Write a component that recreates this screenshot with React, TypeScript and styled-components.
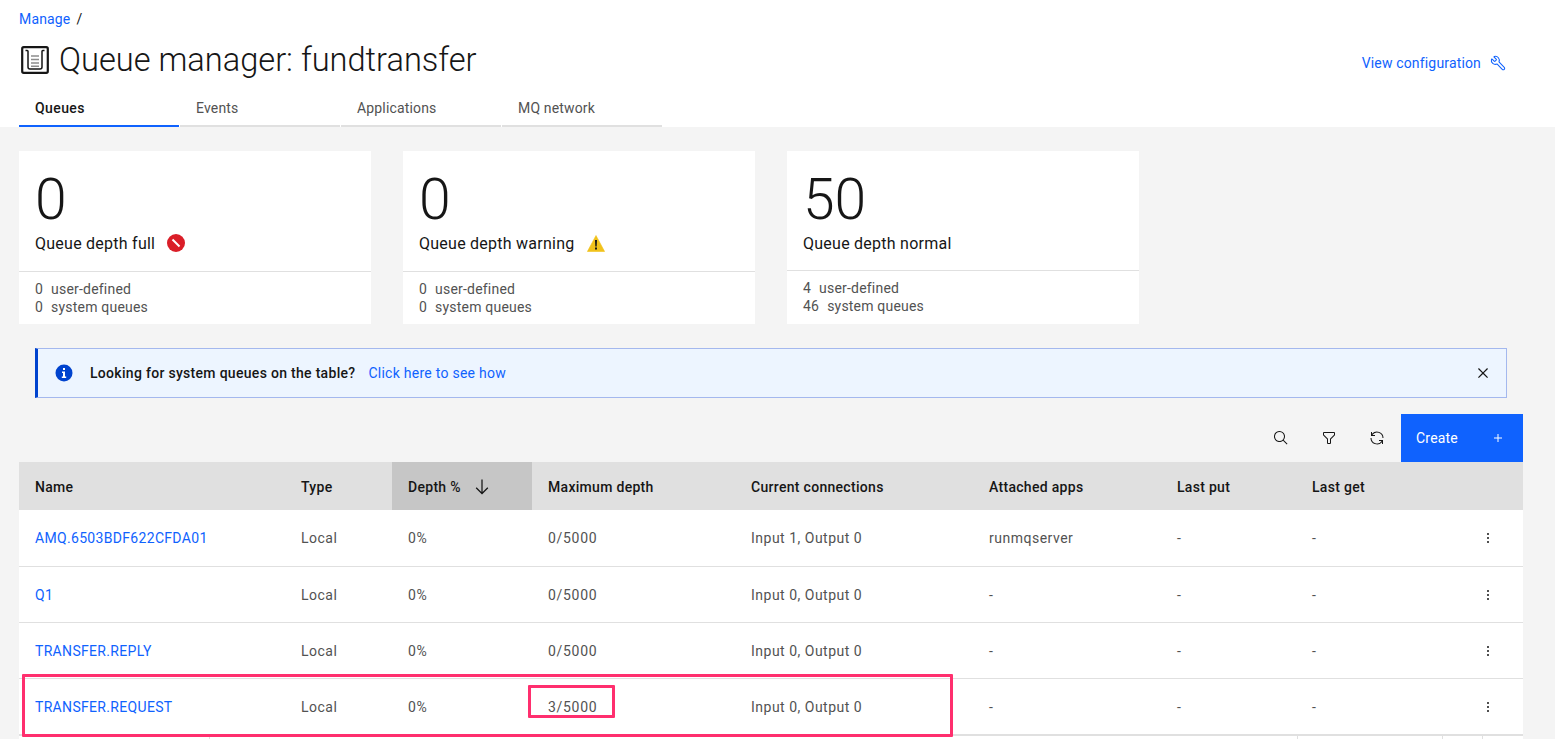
import styled, { createGlobalStyle } from 'styled-components';
import { Wrench } from 'lucide-react';

const GlobalStyle = createGlobalStyle`
    html, body {
        margin: 0;
        height: 739px;
        overflow: hidden;
        background: #f4f4f4;
    }
    * { box-sizing: border-box; }
    body {
        font-family: "Roboto", "Liberation Sans", sans-serif;
        color: #161616;
    }
`;

const Page = styled.div`
    position: relative;
    width: 1555px;
    height: 739px;
    overflow: hidden;
`;

const Header = styled.header`
    height: 127px;
    background: #fff;
    padding: 10px 19px 0;
    display: flex;
    flex-direction: column;
`;

const Breadcrumb = styled.div`
    height: 17px;
    display: flex;
    align-items: center;
    gap: 6px;
    font-size: 14px;
    letter-spacing: 0.16px;
    color: #161616;
`;

const Link = styled.a`
    color: #0f62fe;
    font-size: 14px;
    letter-spacing: 0.16px;
    text-decoration: none;
`;

const TitleRow = styled.div`
    height: 63px;
    padding: 3px 30px 0 2px;
    display: flex;
    align-items: center;
    gap: 10px;
`;

const Title = styled.h1`
    margin: 0;
    font-size: 32.6px;
    font-weight: 300;
    flex: 1;
    color: #161616;
`;

const ConfigLink = styled(Link)`
    margin-top: 6px;
    display: flex;
    align-items: center;
    gap: 9px;
`;

const Tabs = styled.nav`
    display: flex;
    gap: 1px;
`;

const Tab = styled.div<{ $active?: boolean }>`
    width: 160px;
    height: 37px;
    padding: 10px 16px 0;
    font-size: 14px;
    letter-spacing: ${props => props.$active ? '0.4px' : '0.16px'};
    font-weight: ${props => props.$active ? 500 : 400};
    color: ${props => props.$active ? '#161616' : '#525252'};
    border-bottom: 2px solid ${props => props.$active ? '#0f62fe' : '#e0e0e0'};
`;

const Content = styled.main`
    padding: 24px 32px 0 19px;
`;

const Cards = styled.div`
    display: flex;
    gap: 32px;
`;

const Card = styled.section`
    width: 352px;
    height: 173px;
    background: #fff;
`;

const CardTop = styled.div<{ $height: number }>`
    height: ${props => props.$height}px;
    padding: 18px 16px 0;
    border-bottom: 1px solid #e0e0e0;
`;

const CardNumber = styled.div`
    font-size: 57px;
    line-height: 62px;
    font-weight: 300;
`;

const CardLabel = styled.div`
    display: flex;
    align-items: center;
    gap: 12px;
    margin-top: 2px;
    font-size: 16px;
    line-height: 22px;
    letter-spacing: 0.25px;

    svg {
        margin-top: -2px;
    }
`;

const CardBottom = styled.div`
    padding: 8px 16px 0;
    font-size: 14px;
    line-height: 18px;
    letter-spacing: 0.2px;
    color: #525252;
`;

const CountRow = styled.div`
    display: flex;
    gap: 8px;
`;

const Notification = styled.div`
    margin: 24px 16px 0;
    height: 50px;
    display: flex;
    align-items: center;
    background: #edf5ff;
    border: 1px solid #a4b8ee;
    border-left: 3px solid #0043ce;
    padding: 0 13px 0 17px;
    font-size: 14px;
    letter-spacing: 0.3px;
`;

const NotificationText = styled.strong`
    font-weight: 500;
    margin: 0 13px 0 17px;
`;

const NotificationLink = styled(Link)`
    letter-spacing: 0.26px;
`;

const CloseButton = styled.span`
    margin-left: auto;
    display: flex;
`;

const Toolbar = styled.div`
    margin-top: 16px;
    height: 48px;
    display: flex;
    justify-content: flex-end;
    align-items: center;
`;

const ToolIcon = styled.span`
    width: 48px;
    height: 48px;
    display: flex;
    align-items: center;
    justify-content: center;
`;

const CreateButton = styled.button`
    width: 122px;
    height: 48px;
    border: 0;
    padding: 0 17px 0 15px;
    background: #0f62fe;
    color: #fff;
    font: inherit;
    font-size: 14px;
    letter-spacing: 0.2px;
    display: flex;
    align-items: center;
    justify-content: space-between;
`;

const Table = styled.table`
    width: 1504px;
    border-collapse: collapse;
    table-layout: fixed;
    font-size: 14px;
    letter-spacing: 0.5px;
    background: #fff;
`;

const Th = styled.th<{ $sorted?: boolean }>`
    height: 48px;
    padding: 1px 16px 0;
    text-align: left;
    font-weight: 500;
    letter-spacing: 0.3px;
    color: #161616;
    background: ${props => props.$sorted ? '#c6c6c6' : '#e0e0e0'};
`;

const SortHead = styled.span`
    display: flex;
    align-items: center;
    gap: 11px;
`;

const Tr = styled.tr`
    height: 56px;
    border-bottom: 1px solid #e0e0e0;
`;

const Td = styled.td<{ $numeric?: boolean }>`
    padding: 1px 16px 0;
    color: #525252;
    letter-spacing: ${props => props.$numeric ? '0.7px' : 'inherit'};
`;

const NameLink = styled(Link)`
    letter-spacing: 0.32px;
`;

const MenuSplit = styled.div`
    display: flex;
    justify-content: space-between;
    align-items: center;
    padding-right: 11px;
`;

const Pagination = styled.div`
    height: 48px;
    width: 1504px;
    background: #fff;
    border-top: 1px solid #e0e0e0;
    display: flex;
    justify-content: flex-end;
`;

const PageCell = styled.div<{ $width: number }>`
    width: ${props => props.$width}px;
    border-left: 1px solid #e0e0e0;
`;

const Highlight = styled.div`
    position: absolute;
    border: 3px solid #ff2f6e;
    border-radius: 1px;
    pointer-events: none;
`;

const RowHighlight = styled(Highlight)`
    left: 22px;
    top: 674px;
    width: 931px;
    height: 63px;
`;

const CellHighlight = styled(Highlight)`
    left: 528px;
    top: 685px;
    width: 87px;
    height: 33px;
`;

const CarbonIcon = ({ size = 16, color = '#161616', children }: { size?: number, color?: string, children: any }) => (
    <svg width={size} height={size} viewBox="0 0 32 32" fill={color}>{children}</svg>
);

const ManagerIcon = () => (
    <svg width="28" height="28" viewBox="0 0 28 28" fill="none">
        <rect x="1.2" y="1.2" width="25.6" height="25.6" rx="1.5" stroke="#161616" strokeWidth="2.2" />
        <path d="M4.5 4.5h1.7a.8.8 0 0 1 .8.8V21a2 2 0 0 0 2 2h10a2 2 0 0 0 2-2V5.3a.8.8 0 0 1 .8-.8h1.7" stroke="#161616" strokeWidth="1.5" />
        <path d="M10 10h8M10 13.5h8M10 17h8M10 20.3h8" stroke="#8d8d8d" strokeWidth="1.5" />
    </svg>
);

const columns = [266, 107, 140, 203, 238, 188, 135, 227];

const rows = [
    { name: 'AMQ.6503BDF622CFDA01', max: '0/5000', conn: 'Input 1, Output 0', apps: 'runmqserver' },
    { name: 'Q1', max: '0/5000', conn: 'Input 0, Output 0', apps: '-' },
    { name: 'TRANSFER.REPLY', max: '0/5000', conn: 'Input 0, Output 0', apps: '-' },
    { name: 'TRANSFER.REQUEST', max: '3/5000', conn: 'Input 0, Output 0', apps: '-' },
];

const App = () => {
    return (
        <Page>
            <GlobalStyle />
            <Header>
                <Breadcrumb><Link>Manage</Link><span>/</span></Breadcrumb>
                <TitleRow>
                    <ManagerIcon />
                    <Title>Queue manager: fundtransfer</Title>
                    <ConfigLink>View configuration <Wrench size={16} strokeWidth={1.6} style={{ transform: 'scaleX(-1)' }} /></ConfigLink>
                </TitleRow>
                <Tabs>
                    <Tab $active>Queues</Tab>
                    <Tab>Events</Tab>
                    <Tab>Applications</Tab>
                    <Tab>MQ network</Tab>
                </Tabs>
            </Header>
            <Content>
                <Cards>
                    <Card>
                        <CardTop $height={121}>
                            <CardNumber>0</CardNumber>
                            <CardLabel>
                                Queue depth full
                                <svg width="18" height="18" viewBox="0 0 18 18">
                                    <circle cx="9" cy="9" r="9" fill="#da1e28" />
                                    <path d="M5.5 5.5l7 7" stroke="#fff" strokeWidth="2" />
                                </svg>
                            </CardLabel>
                        </CardTop>
                        <CardBottom>
                            <CountRow><span>0</span><span>user-defined</span></CountRow>
                            <CountRow><span>0</span><span>system queues</span></CountRow>
                        </CardBottom>
                    </Card>
                    <Card>
                        <CardTop $height={121}>
                            <CardNumber>0</CardNumber>
                            <CardLabel>
                                Queue depth warning
                                <svg width="18" height="17" viewBox="0 0 18 17">
                                    <path d="M9 .5l8.6 16H.4z" fill="#f1c21b" stroke="#f1c21b" strokeWidth="0.6" strokeLinejoin="round" />
                                    <path d="M8 5h2l-.3 6.5H8.3zM8 12.6h2v2H8z" fill="#161616" />
                                </svg>
                            </CardLabel>
                        </CardTop>
                        <CardBottom>
                            <CountRow><span>0</span><span>user-defined</span></CountRow>
                            <CountRow><span>0</span><span>system queues</span></CountRow>
                        </CardBottom>
                    </Card>
                    <Card>
                        <CardTop $height={120}>
                            <CardNumber>50</CardNumber>
                            <CardLabel>Queue depth normal</CardLabel>
                        </CardTop>
                        <CardBottom>
                            <CountRow><span>4</span><span>user-defined</span></CountRow>
                            <CountRow><span>46</span><span>system queues</span></CountRow>
                        </CardBottom>
                    </Card>
                </Cards>
                <Notification>
                    <svg width="18" height="18" viewBox="0 0 18 18">
                        <circle cx="9" cy="9" r="8.5" fill="#0043ce" />
                        <path d="M8 4h2v2H8zM7 7.5h3v5h1.2V14H6.8v-1.5H8V9H7z" fill="#fff" />
                    </svg>
                    <NotificationText>Looking for system queues on the table?</NotificationText>
                    <NotificationLink>Click here to see how</NotificationLink>
                    <CloseButton>
                        <CarbonIcon size={20}>
                            <path d="M24 9.4L22.6 8 16 14.6 9.4 8 8 9.4 14.6 16 8 22.6 9.4 24 16 17.4 22.6 24 24 22.6 17.4 16 24 9.4z" />
                        </CarbonIcon>
                    </CloseButton>
                </Notification>
                <Toolbar>
                    <ToolIcon>
                        <CarbonIcon>
                            <path d="M29 27.5859l-7.5521-7.5521a11.0177 11.0177 0 1 0-1.4141 1.4141L27.5859 29ZM4 13a9 9 0 1 1 9 9A9.01 9.01 0 0 1 4 13Z" />
                        </CarbonIcon>
                    </ToolIcon>
                    <ToolIcon>
                        <CarbonIcon>
                            <path d="M18,28H14a2,2,0,0,1-2-2V18.41L4.59,11A2,2,0,0,1,4,9.59V6A2,2,0,0,1,6,4H26a2,2,0,0,1,2,2V9.59A2,2,0,0,1,27.41,11L20,18.41V26A2,2,0,0,1,18,28ZM6,6V9.59l8,8V26h4V17.59l8-8V6Z" />
                        </CarbonIcon>
                    </ToolIcon>
                    <ToolIcon>
                        <CarbonIcon>
                            <path d="M12,10H6.78A11,11,0,0,1,27,16h2A13,13,0,0,0,6,7.68V4H4v8h8Z" />
                            <path d="M20,22h5.22A11,11,0,0,1,5,16H3a13,13,0,0,0,23,8.32V28h2V20H20Z" />
                        </CarbonIcon>
                    </ToolIcon>
                    <CreateButton>
                        Create
                        <CarbonIcon color="#fff">
                            <path d="M17 15L17 8 15 8 15 15 8 15 8 17 15 17 15 24 17 24 17 17 24 17 24 15z" />
                        </CarbonIcon>
                    </CreateButton>
                </Toolbar>
                <Table>
                    <colgroup>
                        {columns.map((width, i) => <col key={i} width={width} />)}
                    </colgroup>
                    <thead>
                        <tr>
                            <Th>Name</Th>
                            <Th>Type</Th>
                            <Th $sorted>
                                <SortHead>
                                    Depth %
                                    <CarbonIcon size={20}>
                                        <path d="M24.59 16.59L17 24.17 17 4 15 4 15 24.17 7.41 16.59 6 18 16 28 26 18 24.59 16.59z" />
                                    </CarbonIcon>
                                </SortHead>
                            </Th>
                            <Th>Maximum depth</Th>
                            <Th>Current connections</Th>
                            <Th>Attached apps</Th>
                            <Th>Last put</Th>
                            <Th>Last get</Th>
                        </tr>
                    </thead>
                    <tbody>
                        {rows.map(row => (
                            <Tr key={row.name}>
                                <Td><NameLink>{row.name}</NameLink></Td>
                                <Td>Local</Td>
                                <Td $numeric>0%</Td>
                                <Td $numeric>{row.max}</Td>
                                <Td>{row.conn}</Td>
                                <Td>{row.apps}</Td>
                                <Td>-</Td>
                                <Td>
                                    <MenuSplit>
                                        <span>-</span>
                                        <CarbonIcon>
                                            <circle cx="16" cy="8" r="2" />
                                            <circle cx="16" cy="16" r="2" />
                                            <circle cx="16" cy="24" r="2" />
                                        </CarbonIcon>
                                    </MenuSplit>
                                </Td>
                            </Tr>
                        ))}
                    </tbody>
                </Table>
                <Pagination>
                    <PageCell $width={1088} />
                    <PageCell $width={145} />
                    <PageCell $width={40} />
                    <PageCell $width={41} />
                </Pagination>
            </Content>
            <RowHighlight />
            <CellHighlight />
        </Page>
    );
};

export default App;
